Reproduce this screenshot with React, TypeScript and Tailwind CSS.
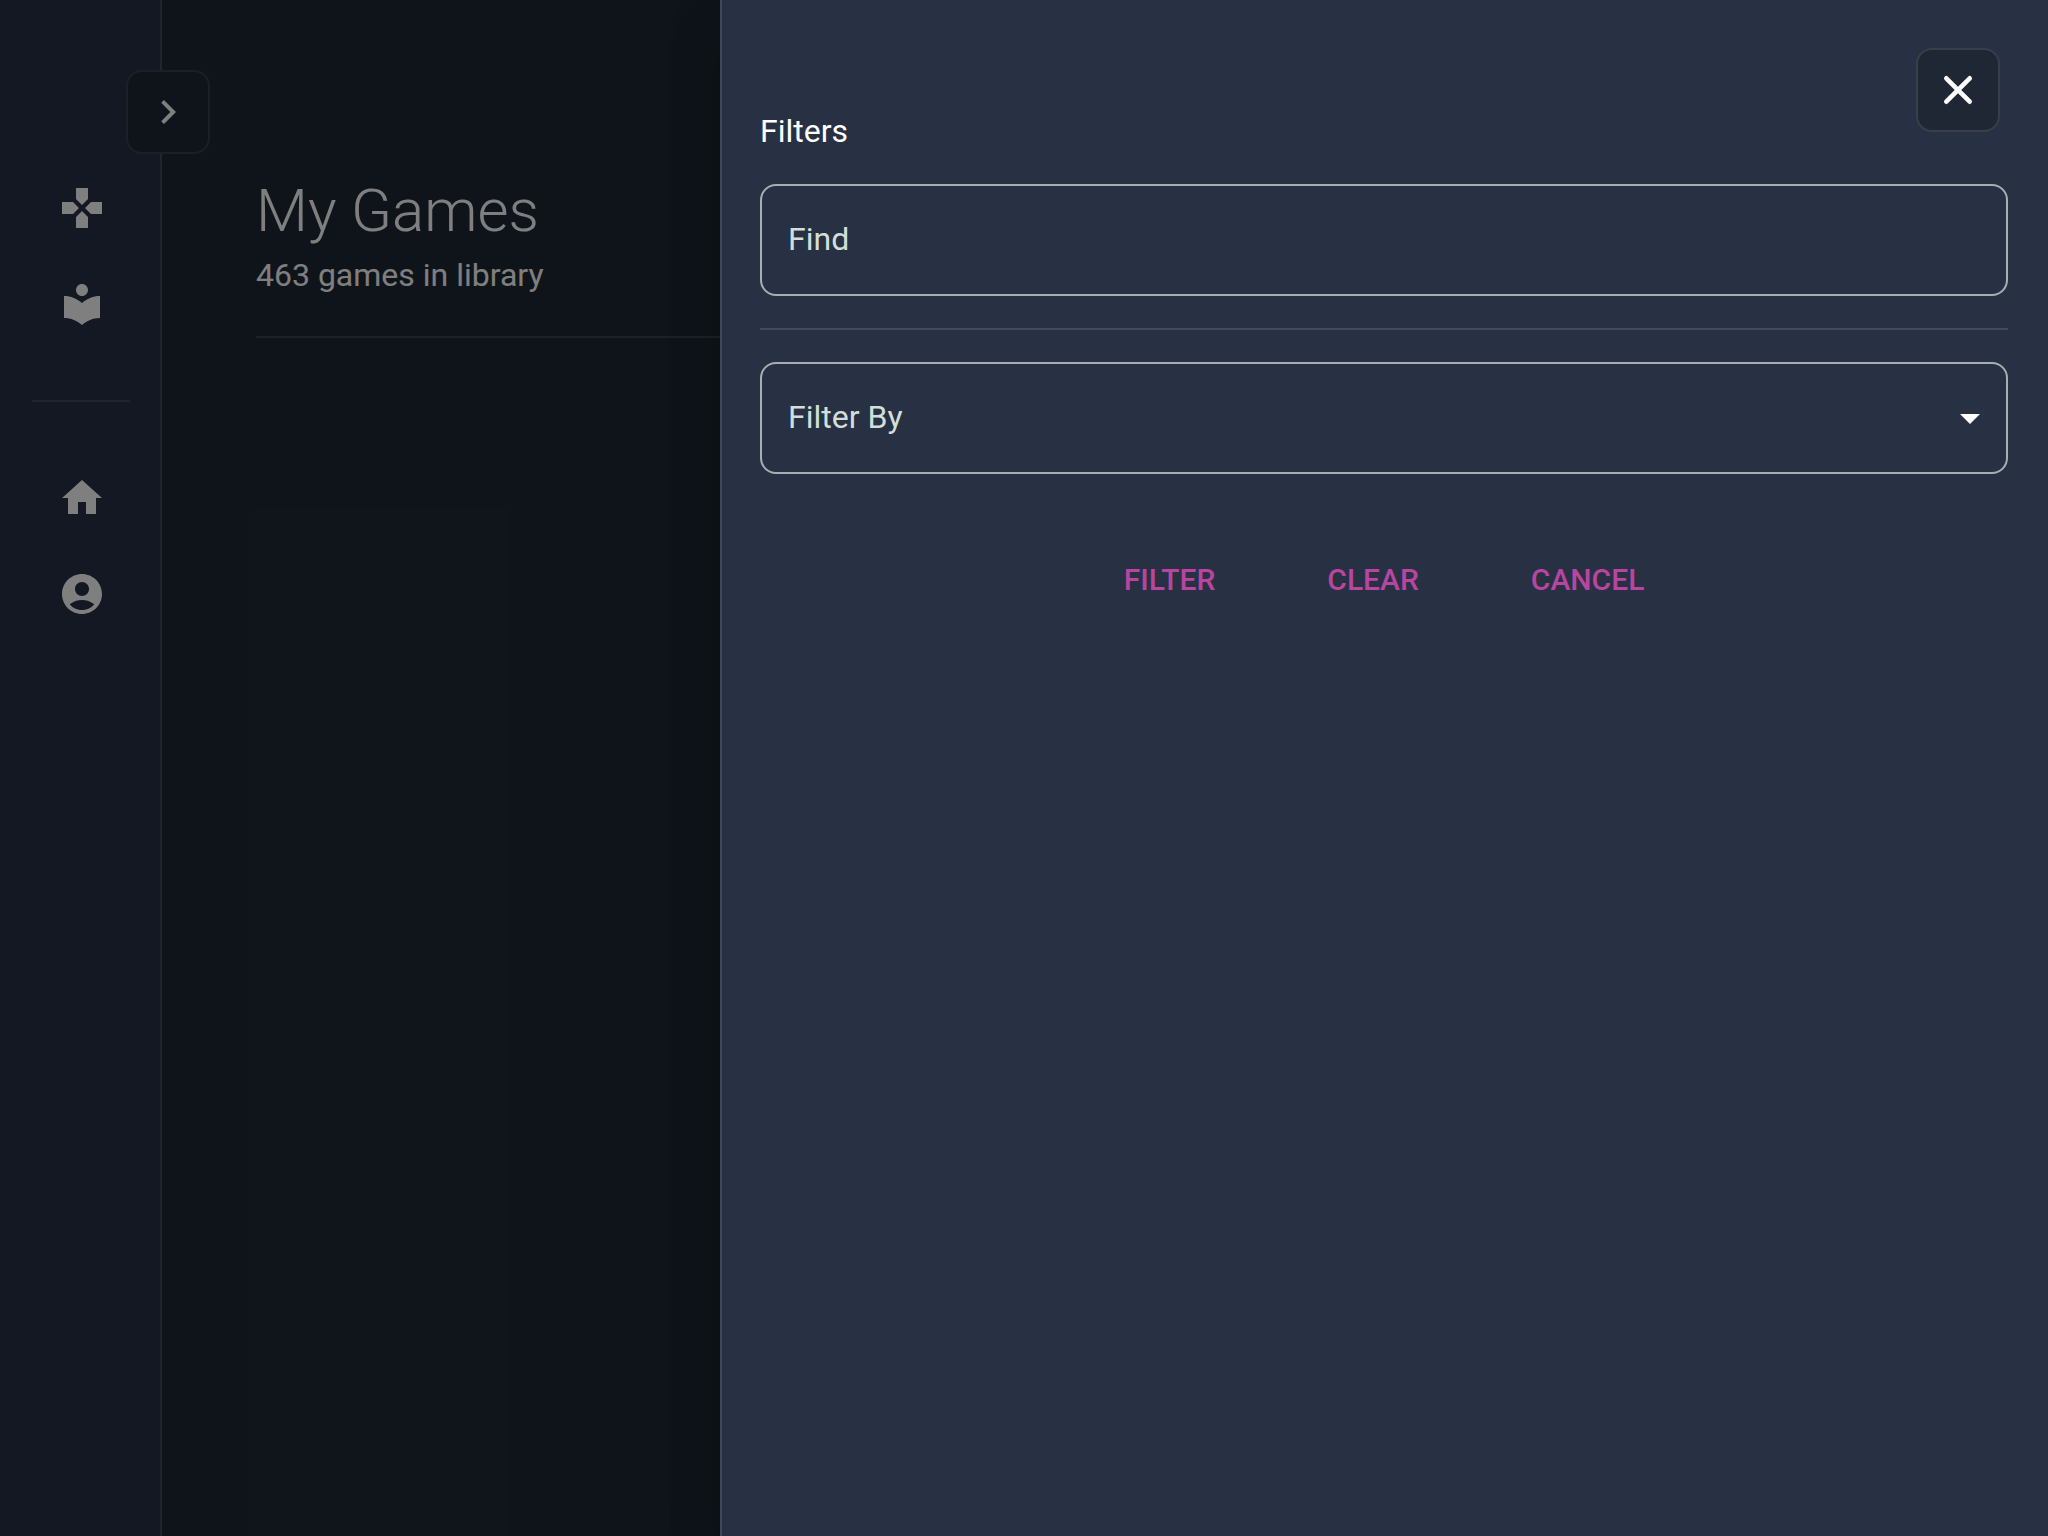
import React from "react";
import {
  MdAccountCircle,
  MdArrowDropDown,
  MdChevronRight,
  MdGamepad,
  MdHome,
  MdLocalLibrary,
} from "react-icons/md";

type RailLinkProps = { label: string; children: React.ReactNode };

function RailLink({ label, children }: RailLinkProps) {
  return (
    <a
      href="#"
      aria-label={label}
      className="flex h-24 items-center justify-center pl-1 text-5xl text-white"
    >
      {children}
    </a>
  );
}

function CloseIcon() {
  return (
    <svg
      viewBox="0 0 24 24"
      fill="none"
      stroke="currentColor"
      strokeWidth="2.3"
      strokeLinecap="round"
      className="size-12"
      aria-hidden="true"
    >
      <path d="M6.15 6.15l11.7 11.7M17.85 6.15l-11.7 11.7" />
    </svg>
  );
}

function Rail() {
  return (
    <nav className="relative w-[162px] shrink-0 border-r-2 border-white/12 bg-[#283045] pt-40">
      <RailLink label="Games">
        <MdGamepad />
      </RailLink>
      <RailLink label="Library">
        <MdLocalLibrary />
      </RailLink>
      <hr className="my-12 mr-[30px] ml-8 border-t-2 border-white/12" />
      <RailLink label="Home">
        <MdHome />
      </RailLink>
      <RailLink label="Account">
        <MdAccountCircle />
      </RailLink>
      <button
        type="button"
        aria-label="Expand menu"
        className="absolute top-[70px] -right-[50px] flex size-[84px] items-center justify-center rounded-2xl border-2 border-[#3a3e48] bg-[#1f2835] text-white"
      >
        <MdChevronRight className="size-12" />
      </button>
    </nav>
  );
}

function FilterDrawer() {
  return (
    <aside
      aria-label="Filters"
      className="absolute inset-y-0 right-0 left-[720px] border-l-2 border-[#42485a] bg-[#283043] pt-[107px] pr-10 pl-[38px] shadow-[0_32px_48px_4px_rgba(0,0,0,0.12),0_12px_56px_4px_rgba(0,0,0,0.08)]"
    >
      <button
        type="button"
        aria-label="Close"
        className="absolute top-12 right-12 flex size-[84px] items-center justify-center rounded-2xl border-2 border-[#383f4b] bg-[#202734] text-white"
      >
        <CloseIcon />
      </button>
      <h2 className="text-[32px] leading-[48px] text-white">Filters</h2>
      <form className="mt-[29px]" onSubmit={(e) => e.preventDefault()}>
        <input
          type="text"
          aria-label="Find"
          placeholder="Find"
          className="block h-28 w-full rounded-2xl border-2 border-[#a9adb3] bg-transparent px-[26px] pb-0.5 text-[32px] text-white placeholder:text-[#d2dfd8]"
        />
        <hr className="my-8 border-t-2 border-white/12" />
        <div className="relative">
          <select
            aria-label="Filter By"
            className="block h-28 w-full appearance-none rounded-2xl border-2 border-[#a9adb3] bg-transparent px-[26px] pb-0.5 text-[32px] text-[#d2dfd8]"
          >
            <option>Filter By</option>
          </select>
          <MdArrowDropDown className="pointer-events-none absolute top-8 right-[14px] size-12 text-white" />
        </div>
        <div className="mt-[72px] flex justify-center gap-[68px]">
          {["Filter", "Clear", "Cancel"].map((name) => (
            <button
              key={name}
              type="button"
              className="px-[22px] py-2 text-[30px] leading-[52px] font-medium text-[#b8459f] uppercase"
            >
              {name}
            </button>
          ))}
        </div>
      </form>
    </aside>
  );
}

export default function App() {
  return (
    <div className="relative flex min-h-screen overflow-hidden bg-[#1f2835] font-['Roboto',sans-serif]">
      <Rail />
      <main className="min-w-0 flex-1 px-[94px] pt-[175px]">
        <h1 className="text-[60px] leading-[72px] font-light text-white">My Games</h1>
        <p className="mt-1 text-[32px] leading-[48px] text-white">463 games in library</p>
        <hr className="mt-[37px] border-t-2 border-white/12" />
      </main>
      <div className="absolute inset-0 bg-black/50" />
      <FilterDrawer />
    </div>
  );
}
